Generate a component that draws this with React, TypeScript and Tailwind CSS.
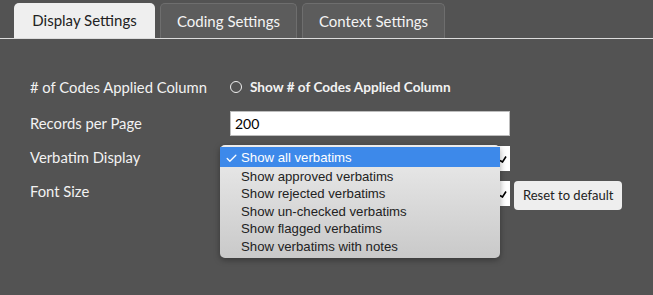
import { Check } from 'lucide-react'

const TABS = ['Display Settings', 'Coding Settings', 'Context Settings']

const VERBATIM_OPTIONS = [
  'Show all verbatims',
  'Show approved verbatims',
  'Show rejected verbatims',
  'Show un-checked verbatims',
  'Show flagged verbatims',
  'Show verbatims with notes',
]

const ui = { fontFamily: 'Lato, "Open Sans", sans-serif' }
const sys = { fontFamily: '"Liberation Sans", Arial, sans-serif' }

function Chevron() {
  return (
    <svg width="8" height="8" viewBox="0 0 8 8" className="text-black">
      <path d="M1 5.5 L3.5 7 L7 1.5" stroke="currentColor" strokeWidth="1.6" fill="none" />
    </svg>
  )
}

function FakeSelect() {
  return (
    <div className="flex h-[25px] w-[280px] items-center justify-end bg-white pr-[3px]">
      <Chevron />
    </div>
  )
}

export default function App() {
  return (
    <div className="h-[295px] w-[653px] overflow-hidden bg-[#535353] text-[#f2f2f2]" style={ui}>
      <div className="flex h-[39px] items-end gap-[5px] border-b border-[#dcdcdc] pl-[14px]">
        {TABS.map((tab, i) => (
          <div
            key={tab}
            className={
              i === 0
                ? 'flex h-[35px] w-[141px] items-center justify-center rounded-t-[5px] bg-[#efefef] text-[15px] text-[#222]'
                : 'flex h-[35px] items-center justify-center rounded-t-[5px] border border-b-0 border-[#6e6e6e] bg-[#5c5c5c] px-[16px] text-[15px] text-[#f4f4f4]'
            }
          >
            {tab}
          </div>
        ))}
      </div>

      <div className="pl-[30px] pt-[38px] text-[14.8px]">
        <div className="flex h-[20px] items-center">
          <div className="w-[200px]">
            # of Codes Applied Column
          </div>
          <div className="flex items-center gap-[8px]">
            <span className="block h-[12px] w-[12px] rounded-full border border-[#f0f0f0]" />
            <span className="text-[13.6px] font-bold">Show # of Codes Applied Column</span>
          </div>
        </div>

        <div className="mt-[14px] flex h-[25px] items-center">
          <div className="w-[200px]">Records per Page</div>
          <div className="flex h-[25px] w-[280px] items-center border border-[#bdbdbd] bg-white px-[4px] text-[14px] text-black">
            200
          </div>
        </div>

        <div className="mt-[10px] flex h-[25px] items-center">
          <div className="-mt-[2px] w-[200px]">Verbatim Display</div>
          <div className="relative">
            <FakeSelect />
            <div
              className="absolute left-[-10px] top-[-1px] z-10 w-[280px] rounded-[5px] bg-gradient-to-b from-[#ececec] to-[#c9c9c9] pb-[3px] pt-[2px] text-[13.2px] text-[#222] shadow-[0_2px_6px_rgba(0,0,0,0.35)]"
              style={sys}
            >
              {VERBATIM_OPTIONS.map((opt, i) => (
                <div
                  key={opt}
                  className={
                    i === 0
                      ? 'flex h-[20px] items-center bg-[#3d89ea] pt-[2px] text-white'
                      : 'flex h-[17.5px] items-center pt-[2px]'
                  }
                >
                  <span className="flex w-[21px] justify-end pr-[3px]">
                    {i === 0 && <Check size={13} strokeWidth={2.4} />}
                  </span>
                  {opt}
                </div>
              ))}
            </div>
          </div>
        </div>

        <div className="mt-[10px] flex items-start">
          <div className="-mt-[2px] flex h-[25px] w-[200px] items-center">Font Size</div>
          <FakeSelect />
          <button className="ml-[4px] h-[29px] rounded-[4px] bg-[#eeeeee] px-[9px] text-[13px] text-[#222]">
            Reset to default
          </button>
        </div>
      </div>
    </div>
  )
}
